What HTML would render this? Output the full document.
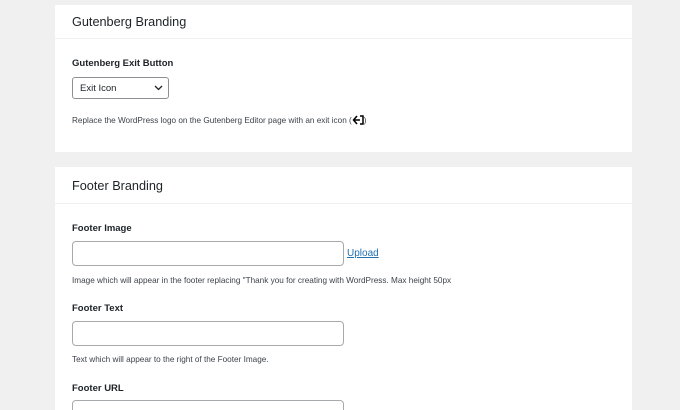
<!DOCTYPE html>
<html><head><style>
html,body{margin:0;width:680px;height:410px;overflow:hidden}
body{background:#f0f0f1;font-family:"Liberation Sans",sans-serif;color:#1d2327;position:relative}
.card{position:absolute;left:55px;width:577px;background:#fff}
.hd{height:33px;border-bottom:1px solid #f0f0f1;position:relative}
.hd span{position:absolute;left:17px;top:10px;font-size:12.7px}
.a{position:absolute;white-space:nowrap}
.lbl{font-size:9.5px;font-weight:bold}
.d{font-size:8.2px;color:#3c434a}
.in{position:absolute;left:72px;width:270px;height:23px;border:1px solid #a7aaad;border-radius:4px;background:#fff}
</style></head><body>
<div class="card" style="top:5px;height:147px"><div class="hd" style="height:33px"><span>Gutenberg Branding</span></div></div>
<div class="a lbl" style="left:72px;top:58px">Gutenberg Exit Button</div>
<div style="position:absolute;left:72px;top:77px;width:95px;height:20px;border:1px solid #8c8f94;border-radius:3px;background:#fff;font-size:9.5px">
<span style="position:absolute;left:7px;top:5px">Exit Icon</span>
<svg style="position:absolute;left:81px;top:7px" width="9" height="6" viewBox="0 0 9 6"><path d="M1 1l3.5 3.5L8 1" fill="none" stroke="#1d2327" stroke-width="1.3"/></svg></div>
<div class="a d" style="left:72px;top:115px">Replace the WordPress logo on the Gutenberg Editor page with an exit icon (<svg width="12" height="10" viewBox="0 0 12 10" style="vertical-align:-2px"><path d="M5 1L1.5 5 5 9M1.5 5H8M8 1h3v8H8" fill="none" stroke="#000" stroke-width="1.5"/></svg>)</div>
<div class="card" style="top:167px;height:250px"><div class="hd" style="height:36px"><span style="top:12px">Footer Branding</span></div></div>
<div class="a lbl" style="left:72px;top:223px">Footer Image</div>
<div class="in" style="top:241px"></div>
<div class="a" style="left:347px;top:248px;font-size:10px;color:#2271b1;text-decoration:underline">Upload</div>
<div class="a d" style="left:72px;top:276px">Image which will appear in the footer replacing "Thank you for creating with WordPress. Max height 50px</div>
<div class="a lbl" style="left:72px;top:303px">Footer Text</div>
<div class="in" style="top:321px"></div>
<div class="a d" style="left:72px;top:355px">Text which will appear to the right of the Footer Image.</div>
<div class="a lbl" style="left:72px;top:383px">Footer URL</div>
<div class="in" style="top:400px"></div>
</body></html>
